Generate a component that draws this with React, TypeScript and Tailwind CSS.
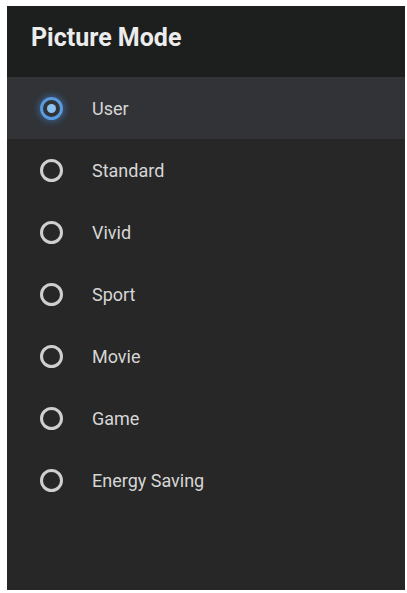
const modes = ["User", "Standard", "Vivid", "Sport", "Movie", "Game", "Energy Saving"];

const Radio = ({ checked }: { checked: boolean }) =>
  checked ? (
    <span className="flex h-[23px] w-[23px] items-center justify-center rounded-full border-[3px] border-[#5a9ae0] shadow-[0_0_6px_2px_rgba(70,140,220,0.45)]">
      <span className="h-[9px] w-[9px] rounded-full bg-[#8cc2f2]" />
    </span>
  ) : (
    <span className="h-[23px] w-[23px] rounded-full border-[3px] border-[#cfcfcf]" />
  );

const App = () => {
  const selected = "User";

  return (
    <div className="h-[593px] w-[407px] bg-white pl-[7px] pr-[2px] pt-[6px] pb-[3px]">
      <div
        className="flex h-full flex-col bg-[#272727]"
        style={{ fontFamily: "Roboto, 'Liberation Sans', sans-serif" }}
      >
        <div className="flex h-[71px] items-center bg-[#1d1f1e] pb-2 pl-6">
          <h1 className="text-[25px] font-bold text-[#ececec]">Picture Mode</h1>
        </div>
        <ul>
          {modes.map((mode) => (
            <li
              key={mode}
              className={
                "flex h-[62px] items-center gap-[29px] pl-[33px] " +
                (mode === selected ? "bg-[#313337]" : "")
              }
            >
              <Radio checked={mode === selected} />
              <span className="text-[18px] text-[#d6d6d6]">{mode}</span>
            </li>
          ))}
        </ul>
      </div>
    </div>
  );
};

export default App;
